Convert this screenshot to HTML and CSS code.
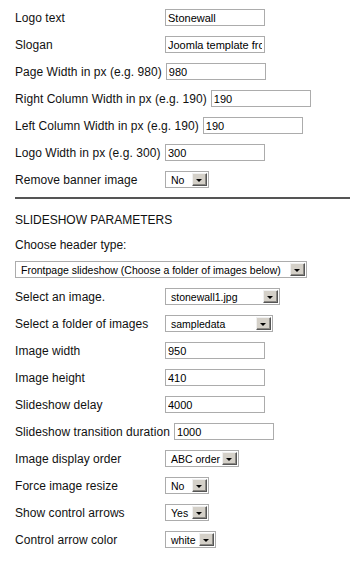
FILE: index.html
```html
<!DOCTYPE html>
<html>
  <head>
    <meta http-equiv="Content-Type" content="text/html; charset=utf-8" />
    <title>Template parameters</title>
    <link rel="stylesheet" href="styles.css">
  </head>

  <body>
    <div class="params">
      <div class="row">
        <label>Logo text</label>
        <input type="text" value="Stonewall" />
      </div>
      <div class="row">
        <label>Slogan</label>
        <input type="text" value="Joomla template from Joomlashack" />
      </div>
      <div class="row">
        <label>Page Width in px (e.g. 980)</label>
        <input type="text" value="980" />
      </div>
      <div class="row">
        <label>Right Column Width in px (e.g. 190)</label>
        <input type="text" value="190" />
      </div>
      <div class="row">
        <label>Left Column Width in px (e.g. 190)</label>
        <input type="text" value="190" />
      </div>
      <div class="row">
        <label>Logo Width in px (e.g. 300)</label>
        <input type="text" value="300" />
      </div>
      <div class="row">
        <label>Remove banner image</label>
        <span class="select sel-yn"><span class="val">No</span><span class="btn"></span></span>
      </div>

      <hr class="sep" />

      <div class="row title">SLIDESHOW PARAMETERS</div>
      <div class="row choose">Choose header type:</div>
      <div class="row wide">
        <span class="select sel-header"><span class="val">Frontpage slideshow (Choose a folder of images below)</span><span class="btn"></span></span>
      </div>

      <div class="row">
        <label>Select an image.</label>
        <span class="select sel-image"><span class="val">stonewall1.jpg</span><span class="btn"></span></span>
      </div>
      <div class="row">
        <label>Select a folder of images</label>
        <span class="select sel-folder"><span class="val">sampledata</span><span class="btn"></span></span>
      </div>
      <div class="row">
        <label>Image width</label>
        <input type="text" value="950" />
      </div>
      <div class="row">
        <label>Image height</label>
        <input type="text" value="410" />
      </div>
      <div class="row">
        <label>Slideshow delay</label>
        <input type="text" value="4000" />
      </div>
      <div class="row">
        <label>Slideshow transition duration</label>
        <input type="text" value="1000" />
      </div>
      <div class="row">
        <label>Image display order</label>
        <span class="select sel-order"><span class="val">ABC order</span><span class="btn"></span></span>
      </div>
      <div class="row">
        <label>Force image resize</label>
        <span class="select sel-yn"><span class="val">No</span><span class="btn"></span></span>
      </div>
      <div class="row">
        <label>Show control arrows</label>
        <span class="select sel-yn"><span class="val">Yes</span><span class="btn"></span></span>
      </div>
      <div class="row">
        <label>Control arrow color</label>
        <span class="select sel-color"><span class="val">white</span><span class="btn"></span></span>
      </div>
    </div>
  </body>
</html>
```

FILE: styles.css
```css
* {
  margin: 0;
  padding: 0;
  box-sizing: border-box;
}
body {
  background-color: #fff;
  color: #111;
  font: 12px "Liberation Sans", Arial, sans-serif;
}
.params {
  padding: 4px 0 0 15px;
}
.row {
  display: flex;
  align-items: center;
  height: 27px;
}
.row label {
  min-width: 146px;
  margin-right: 4px;
  white-space: nowrap;
  letter-spacing: 0.05px;
}
.row input {
  width: 100px;
  height: 17px;
  border: 1px solid #acacac;
  padding: 0 2px;
  font: 11px "Liberation Sans", Arial, sans-serif;
  color: #000;
  outline: none;
}
/* 分隔线 */
.sep {
  border: 0;
  height: 2px;
  background-color: #555;
  margin: 4px 0 7px;
}
.title {
  height: 27px;
}
.choose {
  height: 23px;
}
.wide {
  height: 27px;
}

/* 下拉框 */
.select {
  display: flex;
  align-items: center;
  height: 17px;
  border: 1px solid #acacac;
  padding: 1px;
  background-color: #fff;
  font-size: 10.5px;
  color: #000;
}
.select .val {
  flex: 1;
  padding-left: 4px;
  white-space: nowrap;
  overflow: hidden;
}
.select .btn {
  position: relative;
  width: 15px;
  height: 13px;
  flex: none;
  border: 1px solid;
  border-color: #f0f0f0 #555 #555 #f0f0f0;
  background-color: #d4d0c8;
  box-shadow: inset -1px -1px 0 #8c8a85;
}
.select .btn::after {
  content: "";
  position: absolute;
  left: 3px;
  top: 5px;
  border-style: solid;
  border-width: 3px 3px 0;
  border-color: #000 transparent transparent;
}
.sel-yn {
  width: 44px;
}
.sel-header {
  width: 292px;
}
.sel-image {
  width: 115px;
}
.sel-folder {
  width: 108px;
}
.sel-order {
  width: 74px;
}
.sel-color {
  width: 51px;
}
```
